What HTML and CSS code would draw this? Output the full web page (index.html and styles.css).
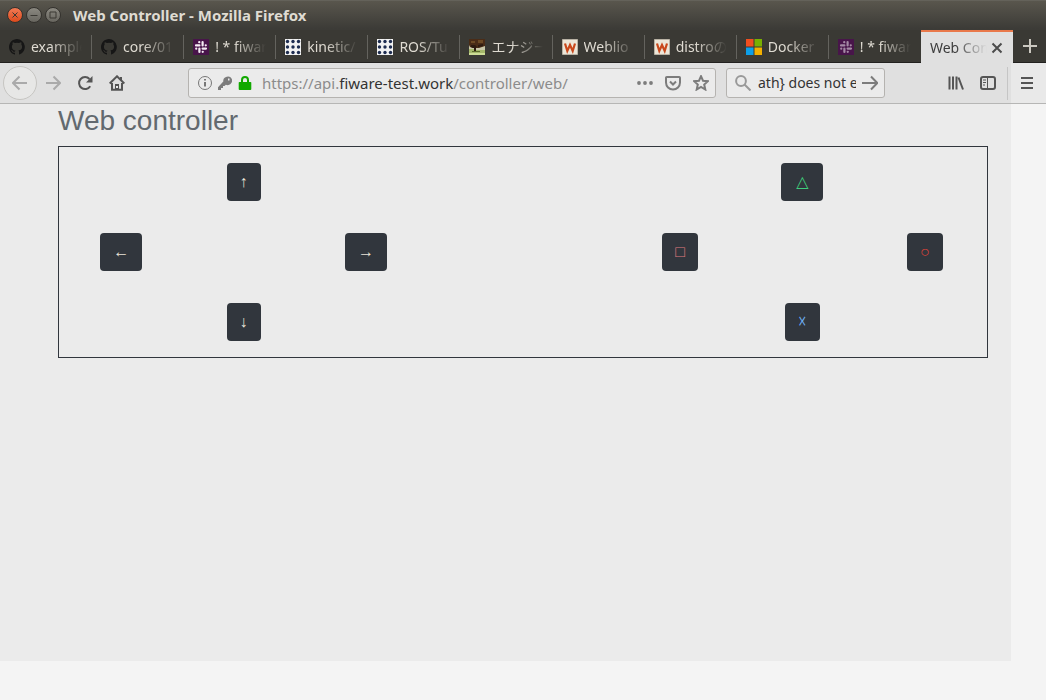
FILE: index.html
```html
<!DOCTYPE html>
<html lang="en">
<head>
<meta charset="utf-8">
<title>Web Controller</title>
<link rel="stylesheet" href="styles.css">
</head>
<body>
<svg class="defs" aria-hidden="true">
  <symbol id="github" viewBox="0 0 16 16"><path fill="#161616" d="M8 0C3.6 0 0 3.6 0 8c0 3.5 2.3 6.500 5.500 7.600.4.1.5-.2.5-.4v-1.500c-2.200.500-2.700-.9-2.700-.9-.4-.9-.9-1.200-.9-1.200-.7-.5.1-.5.1-.5.8.1 1.200.8 1.200.8.7 1.200 1.900.9 2.300.7.1-.5.3-.9.5-1.100-1.800-.2-3.600-.9-3.600-4 0-.9.3-1.600.8-2.100-.1-.2-.4-1 .1-2.100 0 0 .7-.2 2.200.8a7.500 7.500 0 0 1 4 0c1.500-1 2.200-.8 2.200-.8.4 1.100.2 1.900.1 2.100.5.6.8 1.300.8 2.100 0 3.100-1.900 3.700-3.700 3.900.3.300.6.800.6 1.500v2.200c0 .2.1.5.6.4A8 8 0 0 0 8 0z"/></symbol>
  <symbol id="slack" viewBox="0 0 16 16"><path fill="#48154a" d="M0 0h16v16H0z"/><g stroke="currentColor" stroke-width="2.200" stroke-linecap="round"><path d="M3 6.400h3.400M9.600 3v3.400M9.600 9.600H13M6.400 9.600V13"/><path d="M6.200 3.200h.1M12.700 6.300h.1M9.700 12.800h.1M3.200 9.700h.1"/></g></symbol>
  <symbol id="ros" viewBox="0 0 16 16"><path fill="#f2f2f2" d="M0 0h16v16H0z"/><g fill="#1d2c50"><circle cx="2.500" cy="2.500" r="1.700"/><circle cx="8" cy="2.500" r="1.700"/><circle cx="13.500" cy="2.500" r="1.700"/><circle cx="2.500" cy="8" r="1.700"/><circle cx="8" cy="8" r="1.700"/><circle cx="13.500" cy="8" r="1.700"/><circle cx="2.500" cy="13.500" r="1.700"/><circle cx="8" cy="13.500" r="1.700"/><circle cx="13.500" cy="13.500" r="1.700"/></g></symbol>
  <symbol id="tree" viewBox="0 0 16 16"><path fill="#c9c7a8" d="M0 0h16v16H0z"/><path fill="#4a2c17" d="M0 0h16v7l-3 1-3 1H4L1 8 0 6z"/><path fill="#6d4a25" d="M2 2h4v2H2zM9 1h5v3H9z"/><path fill="#2d1b10" d="M2 6h4l2 2-4 1-2-1zM5 8h2v6H5zM9 6l5-1v2l-5 1z"/><path fill="#a4b76a" d="M0 10h5v2h2v-1h9v5H0z"/><path fill="#5c6b2c" d="M3 12h8v1H3z"/><path fill="#cddc96" d="M0 14h16v2H0z"/></symbol>
  <symbol id="weblio" viewBox="0 0 16 16"><path fill="#ece6d8" stroke="#b9b2a4" d="M.5.5h15v15H.5z"/><path fill="none" stroke="#c9481b" stroke-width="2.200" d="M3 4.500 5.300 12 8 6l2.700 6L13 4.500"/></symbol>
  <symbol id="ms" viewBox="0 0 16 16"><path fill="#f04e1f" d="M0 0h7.500v7.500H0z"/><path fill="#79b001" d="M8.500 0H16v7.500H8.500z"/><path fill="#0d9fe8" d="M0 8.500h7.500V16H0z"/><path fill="#f3b000" d="M8.500 8.500H16V16H8.500z"/></symbol>
</svg>

<header class="titlebar">
  <div class="controls">
    <button class="control control-close" aria-label="Close"><svg viewBox="0 0 14 14"><path d="m4.500 4.500 5 5m0-5-5 5"/></svg></button>
    <button class="control" aria-label="Minimize"><svg viewBox="0 0 14 14"><path d="M3.500 7.500h7"/></svg></button>
    <button class="control" aria-label="Maximize"><svg viewBox="0 0 14 14"><path d="M4 4h6v6H4z"/></svg></button>
  </div>
  <span class="window-title">Web Controller - Mozilla Firefox</span>
</header>

<nav class="tabs" aria-label="Tabs">
  <button class="tab"><svg class="favicon"><use href="#github"/></svg><span class="label">example</span></button>
  <button class="tab"><svg class="favicon"><use href="#github"/></svg><span class="label">core/01</span></button>
  <button class="tab"><svg class="favicon"><use href="#slack"/></svg><span class="label">! * fiware</span></button>
  <button class="tab"><svg class="favicon"><use href="#ros"/></svg><span class="label">kinetic/</span></button>
  <button class="tab"><svg class="favicon"><use href="#ros"/></svg><span class="label">ROS/Tu</span></button>
  <button class="tab"><svg class="favicon"><use href="#tree"/></svg><span class="label">エナジー</span></button>
  <button class="tab"><svg class="favicon"><use href="#weblio"/></svg><span class="label">Weblio</span></button>
  <button class="tab"><svg class="favicon"><use href="#weblio"/></svg><span class="label">distroの</span></button>
  <button class="tab"><svg class="favicon"><use href="#ms"/></svg><span class="label">Docker</span></button>
  <button class="tab"><svg class="favicon favicon-dim"><use href="#slack"/></svg><span class="label">! * fiware</span></button>
  <div class="tab tab-active"><span class="label">Web Con</span><button class="tab-close" aria-label="Close tab"><svg viewBox="0 0 12 12"><path d="m1.500 1.500 9 9m0-9-9 9"/></svg></button></div>
  <button class="new-tab" aria-label="New tab"><svg viewBox="0 0 14 14"><path d="M7 0v14M0 7h14"/></svg></button>
</nav>

<div class="toolbar">
  <button class="nav-back" aria-label="Back"><svg class="icon" viewBox="0 0 16 16"><path d="M15 8H1.500M7.500 1.500 1 8l6.500 6.500"/></svg></button>
  <button class="nav-button nav-disabled" aria-label="Forward"><svg class="icon" viewBox="0 0 16 16"><path d="M1 8h13.500M8.500 1.500 15 8l-6.500 6.500"/></svg></button>
  <button class="nav-button" aria-label="Reload"><svg class="icon" viewBox="0 0 16 16"><path d="M13.200 11.200A6 6 0 1 1 12.500 4"/><path class="solid" d="M15.500 1v6.500H9z"/></svg></button>
  <button class="nav-button" aria-label="Home"><svg class="icon" viewBox="0 0 16 16"><path d="M.7 8.500 8 1.300l7.300 7.200M3 8v6.800h10V8"/><path class="solid" d="M6 9h4v6H6zM11 2h2v4l-2-2z"/><path class="hole" d="M8 11v2"/></svg></button>
  <div class="location">
    <svg class="icon thin" viewBox="0 0 16 16"><circle cx="8" cy="8" r="6.500"/><path class="info" d="M8 7v4.500M8 4v1.500"/></svg>
    <svg class="icon grey" viewBox="0 0 16 16"><path class="solid" d="M15 4.500A4.500 4.500 0 0 0 6.300 6.600L1 12.300V15h3v-2h2v-2h1.500l1.300-1.300A4.500 4.500 0 0 0 15 4.500z"/><path class="hole" d="M11 4.500h1.500"/></svg>
    <svg class="icon lock" viewBox="0 0 16 16"><path d="M5 8V5a3 3 0 0 1 6 0v3"/><path class="solid" d="M2.500 7h11a.8.8 0 0 1 .8.8V14a1 1 0 0 1-1 1H2.700a1 1 0 0 1-1-1V7.800a.8.8 0 0 1 .8-.8z"/></svg>
    <div class="url">https://api.<span class="domain">fiware-test.work</span>/controller/web/</div>
    <div class="page-actions">
      <svg class="icon grey" viewBox="0 0 16 16"><g class="solid"><circle cx="2" cy="8" r="1.900"/><circle cx="8" cy="8" r="1.900"/><circle cx="14" cy="8" r="1.900"/></g></svg>
      <svg class="icon grey" viewBox="0 0 16 16"><path d="M1.800 2h12.400a.8.8 0 0 1 .8.8V7.500a7 7 0 0 1-14 0V2.800a.8.8 0 0 1 .8-.8zM5 6.500l3 3 3-3"/></svg>
      <svg class="icon grey" viewBox="0 0 16 16"><path d="m8 1.200 2 4.500 4.900.5-3.700 3.300 1.100 5L8 12l-4.300 2.500 1.100-5L1.100 6.200 6 5.700z"/></svg>
    </div>
  </div>
  <div class="search">
    <svg class="icon light" viewBox="0 0 16 16"><circle cx="6" cy="6" r="4.900"/><path d="m9.500 9.500 6 6"/></svg>
    <input class="search-input" type="text" value="ath} does not exist" aria-label="Search">
    <button class="search-go" aria-label="Search now"><svg class="icon grey" viewBox="0 0 16 16"><path d="M0 8h15M9 1.500 15.300 8 9 14.500"/></svg></button>
  </div>
  <div class="tools">
    <button class="nav-button" aria-label="Library"><svg class="icon" viewBox="0 0 16 16"><path d="M1.500 1.500v13M5 1.500v13M8.500 1.500v13M10.500 2.500l4.500 12"/></svg></button>
    <button class="nav-button" aria-label="Sidebars"><svg class="icon" viewBox="0 0 16 16"><rect x="1" y="2" width="14" height="12" rx="2"/><path class="thin" d="M7.500 2v12M3 5h3M3 7.500h3M3 10h2"/></svg></button>
  </div>
  <button class="menu" aria-label="Menu"><svg viewBox="0 0 12 12"><path d="M0 1h12M0 6h12M0 11h12"/></svg></button>
</div>

<main class="viewport">
  <div class="page">
    <h1 class="heading">Web controller</h1>
    <section class="controller">
      <div class="pad">
        <button class="key up">↑</button>
        <button class="key left">←</button>
        <button class="key right">→</button>
        <button class="key down">↓</button>
      </div>
      <div class="pad pad-end">
        <button class="key up triangle">△</button>
        <button class="key left square">□</button>
        <button class="key right circle">○</button>
        <button class="key down cross">☓</button>
      </div>
    </section>
  </div>
</main>
</body>
</html>
```

FILE: styles.css
```css
* { box-sizing: border-box; }

body {
  margin: 0;
  min-height: 100vh;
  display: flex;
  flex-direction: column;
  background: #f4f4f4;
  font: 14px/20px "Noto Sans", "Noto Sans CJK JP", sans-serif;
}

button {
  margin: 0;
  padding: 0;
  border: 0;
  background: none;
  color: inherit;
  font: inherit;
}

svg { display: block; flex: none; fill: none; stroke: currentColor; }
.defs { position: absolute; width: 0; height: 0; }

.titlebar {
  display: flex;
  align-items: center;
  gap: 12px;
  height: 30px;
  padding: 0 7px 2px;
  background: linear-gradient(#59564d, #3c3b37 95%);
  border-top: 1px solid #64625a;
  color: #dfdbd2;
}
.controls { display: flex; gap: 3px; }
.control {
  width: 16px;
  height: 16px;
  border: 1px solid #34322e;
  border-radius: 50%;
  background: linear-gradient(#8b8981, #68665f);
  color: #3a3833;
}
.control svg { width: 14px; height: 14px; }
.control-close { background: linear-gradient(#f37b55, #dd4a1c); }
.window-title { font-size: 15px; font-weight: 700; }

.tabs {
  display: flex;
  height: 33px;
  background: #3a3934;
  border-bottom: 1px solid #22211f;
  color: #dfdbd2;
}
.tab {
  position: relative;
  display: flex;
  flex: 1 1 0;
  align-items: center;
  gap: 6px;
  min-width: 0;
  padding: 2px 10px 0 9px;
}
.tab:not(.tab-active)::after {
  content: "";
  position: absolute;
  top: 5px;
  right: 0;
  width: 1px;
  height: 24px;
  background: #64635e;
}
.tab:nth-child(10)::after { display: none; }
.favicon { width: 16px; height: 16px; stroke: none; color: #f5eef5; }
.favicon-dim { color: #a48aa5; }
.label {
  flex: 1;
  min-width: 0;
  overflow: hidden;
  white-space: nowrap;
  text-align: left;
  -webkit-mask-image: linear-gradient(to left, transparent, #000 32px);
  mask-image: linear-gradient(to left, transparent, #000 32px);
}
.tab-active {
  gap: 4px;
  margin: 0 0 -1px;
  padding: 0 10px 0 9px;
  border-top: 2px solid #e9794b;
  background: #e0e0e0;
  color: #3c3c3c;
}
.tab-close svg { width: 12px; height: 12px; stroke: #4c4c4c; stroke-width: 2; }
.new-tab { display: flex; align-items: center; justify-content: center; width: 33px; }
.new-tab svg { width: 14px; height: 14px; stroke: #cbc8c1; stroke-width: 2; }

.toolbar {
  display: flex;
  align-items: center;
  height: 41px;
  padding-left: 3px;
  background: linear-gradient(to left, #e9e9e9 35px, #e0e0e0 35px);
  border-bottom: 1px solid #b6b6b5;
  color: #555;
}
.icon { width: 16px; height: 16px; stroke-width: 2; }
.solid { fill: currentColor; stroke: none; }
.thin { stroke-width: 1; }
.info { stroke-width: 2; }
.hole { stroke: #ebebeb; }
.grey { color: #7c7c7c; }
.light { color: #999; }
.lock { color: #12a900; }

.nav-back {
  display: flex;
  align-items: center;
  justify-content: center;
  width: 34px;
  height: 34px;
  border: 1px solid #c6c5c2;
  border-radius: 50%;
  background: #e7e7e6;
  color: #aaa;
}
.nav-button { display: flex; justify-content: center; width: 32px; }
.nav-disabled { color: #aaa; }

.location,
.search {
  display: flex;
  align-items: center;
  height: 30px;
  border: 1px solid #b5b3b0;
  border-radius: 3px;
  background: #ebebeb;
}
.location { flex: 1; gap: 4px; min-width: 0; margin-left: 55px; padding: 0 6px 0 8px; }
.location .thin { color: #777; }
.url {
  flex: 1;
  min-width: 0;
  margin-left: 5px;
  overflow: hidden;
  white-space: nowrap;
  color: #8c8c8c;
  font-size: 15px;
}
.domain { color: #333; }
.page-actions { display: flex; gap: 12px; }
.search { width: 159px; margin-left: 10px; padding: 0 6px 0 8px; }
.search-input {
  flex: 1;
  min-width: 0;
  margin: 0 6px 0 7px;
  padding: 0;
  border: 0;
  background: none;
  color: #333;
  font: inherit;
}
.tools {
  display: flex;
  align-items: center;
  height: 33px;
  margin-left: 55px;
  padding-right: 3px;
  border-right: 1px solid #c5c5c5;
}
.menu { display: flex; align-items: center; justify-content: center; width: 38px; }
.menu svg { width: 12px; height: 12px; stroke-width: 2; }

.viewport { display: flex; flex: 1; padding: 0 35px 39px 0; }
.page { flex: 1; padding: 0 23px 0 58px; background: #ebebeb; }
.heading {
  margin: 0 0 8px;
  color: #62696f;
  font: 400 28px/34px "Liberation Sans", Arial, sans-serif;
}
.controller {
  display: grid;
  grid-template-columns: 23fr 12fr 23fr;
  padding: 16px 1px;
  border: 1px solid #31363d;
}
.pad {
  display: grid;
  grid-template-columns: repeat(3, 1fr);
  row-gap: 32px;
  justify-items: center;
}
.pad-end { grid-column: 3; }
.key {
  padding: 7px 13px;
  border-radius: 4px;
  background: #31363d;
  color: #e9e4d8;
  font: 16px/24px "Liberation Sans", "Noto Sans CJK JP", sans-serif;
}
.up { grid-area: 1 / 2; }
.left { grid-area: 2 / 1; }
.right { grid-area: 2 / 3; }
.down { grid-area: 3 / 2; }
.triangle { min-width: 42px; color: #3fce7c; font-family: "DejaVu Sans", sans-serif; }
.square { color: #e07a80; }
.circle { color: #d8423a; }
.cross { color: #6fb0f4; }
```
